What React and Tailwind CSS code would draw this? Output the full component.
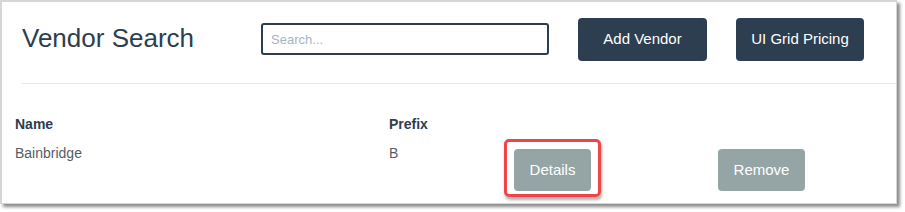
import React from "react";

export default function App() {
  const font = { fontFamily: '"Liberation Sans", Arial, sans-serif' };
  return (
    <div className="w-[905px] h-[212px] bg-white overflow-hidden" style={font}>
      <div className="w-[897px] h-[204px] bg-white border-t-2 border-l-2 border-r border-b border-[#d6d6d6] shadow-[3px_3px_3px_rgba(0,0,0,0.45)]">
        {/* Header */}
        <div className="flex items-start h-[81px] pl-[20px]">
          <h3 className="mt-[20px] w-[239px] text-[26px] leading-[32px] text-[#2c3e50] font-normal">
            Vendor Search
          </h3>
          <input
            className="mt-[21px] w-[288px] h-[32px] border-2 border-[#2c3e50] rounded-[3px] px-[8px] text-[13px] text-[#2c3e50] placeholder:text-[#aab4bf] outline-none"
            placeholder="Search..."
          />
          <button className="mt-[16px] ml-[29px] w-[129px] h-[43px] bg-[#2c3e50] text-white text-[15px] rounded-[4px]">
            Add Vendor
          </button>
          <button className="mt-[16px] ml-[29px] w-[128px] h-[43px] bg-[#2c3e50] text-white text-[15px] rounded-[4px]">
            UI Grid Pricing
          </button>
        </div>
        <div className="ml-[20px] h-px bg-[#e8e8e8]" />

        {/* Table */}
        <div className="pt-[30px] pl-[13px] text-[14px]">
          <div className="flex h-[20px] leading-[20px] font-bold text-[#2c3e50]">
            <div className="w-[374px]">Name</div>
            <div>Prefix</div>
          </div>
          <div className="flex items-start mt-[5px] text-[#555d66]">
            <div className="w-[374px] pt-[4px] leading-[20px]">Bainbridge</div>
            <div className="w-[115px] pt-[4px] leading-[20px]">B</div>
            <div className="border-[3px] border-[#f14545] rounded-[5px] pt-[7px] pb-[3px] px-[7px] shadow-[1px_3px_3px_rgba(0,0,0,0.3)]">
              <button className="w-[77px] h-[42px] bg-[#95a5a6] text-white text-[15px] rounded-[4px]">
                Details
              </button>
            </div>
            <button className="ml-[117px] mt-[10px] w-[87px] h-[42px] bg-[#95a5a6] text-white text-[15px] rounded-[4px]">
              Remove
            </button>
          </div>
        </div>
      </div>
    </div>
  );
}
